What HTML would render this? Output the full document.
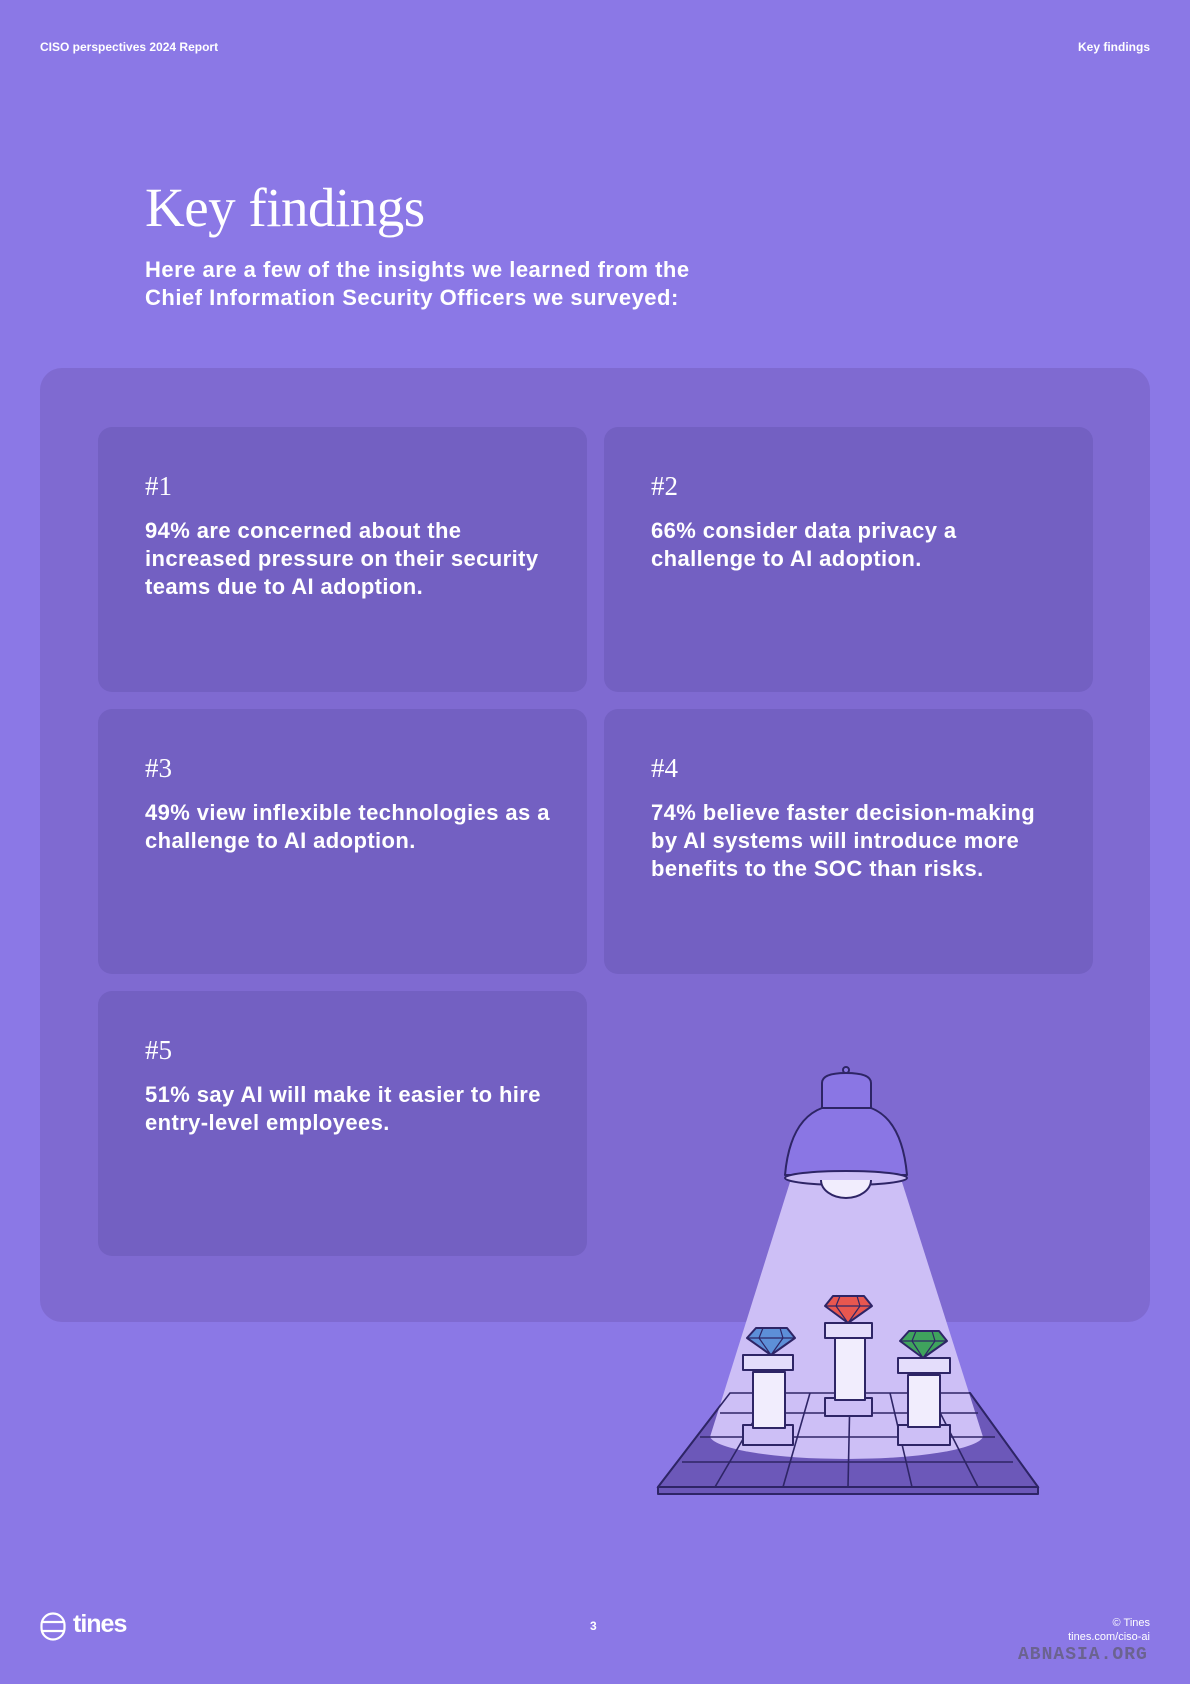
<!DOCTYPE html>
<html><head><meta charset="utf-8"><style>
*{margin:0;padding:0;box-sizing:border-box}
body{width:1190px;height:1684px;background:#8b78e6;position:relative;overflow:hidden;font-family:"Liberation Sans",sans-serif;color:#fff}
.hdr{position:absolute;top:40px;font-size:12px;font-weight:bold;letter-spacing:0}
h1{position:absolute;left:145px;top:176px;font-family:"Liberation Serif",serif;font-weight:normal;font-size:55px;letter-spacing:-0.5px}
.sub{position:absolute;left:145px;top:256px;font-size:22px;font-weight:bold;line-height:28px;letter-spacing:0.5px}
.panel{position:absolute;left:40px;top:368px;width:1110px;height:954px;background:#7f6ad1;border-radius:22px}
.card{position:absolute;width:489px;height:265px;background:#7360c2;border-radius:14px}
.num{position:absolute;left:47px;top:44px;font-family:"Liberation Serif",serif;font-size:27px}
.txt{position:absolute;left:47px;top:90px;font-size:22px;font-weight:bold;line-height:28px;letter-spacing:0.4px;white-space:nowrap}
.ft{position:absolute;font-size:12px;font-weight:bold}
</style></head><body>
<div class="hdr" style="left:40px">CISO perspectives 2024 Report</div>
<div class="hdr" style="right:40px">Key findings</div>
<h1>Key findings</h1>
<div class="sub">Here are a few of the insights we learned from the<br>Chief Information Security Officers we surveyed:</div>
<div class="panel"></div>
<div class="card" style="left:98px;top:427px"><div class="num">#1</div><div class="txt">94% are concerned about the<br>increased pressure on their security<br>teams due to AI adoption.</div></div>
<div class="card" style="left:604px;top:427px"><div class="num">#2</div><div class="txt">66% consider data privacy a<br>challenge to AI adoption.</div></div>
<div class="card" style="left:98px;top:709px"><div class="num">#3</div><div class="txt">49% view inflexible technologies as a<br>challenge to AI adoption.</div></div>
<div class="card" style="left:604px;top:709px"><div class="num">#4</div><div class="txt">74% believe faster decision-making<br>by AI systems will introduce more<br>benefits to the SOC than risks.</div></div>
<div class="card" style="left:98px;top:991px"><div class="num">#5</div><div class="txt">51% say AI will make it easier to hire<br>entry-level employees.</div></div>

<svg style="position:absolute;left:0;top:0" width="1190" height="1684" viewBox="0 0 1190 1684">
<g stroke="#2e2566" stroke-width="2" stroke-linejoin="round">
<polygon points="730,1393 970,1393 1038,1487 658,1487" fill="#6c58b9"/>
<polygon points="658,1487 1038,1487 1038,1494 658,1494" fill="#6c58b9"/>
</g>
<path d="M790,1182 L902,1182 L983,1437 A137,24 0 0 1 710,1437 Z" fill="#cdbff6"/>
<g stroke="#2e2566" stroke-width="1.6" fill="none">
<line x1="720" y1="1413" x2="978" y2="1413"/>
<line x1="700" y1="1437" x2="995" y2="1437"/>
<line x1="682" y1="1462" x2="1013" y2="1462"/>
<line x1="770" y1="1393" x2="715" y2="1487"/>
<line x1="810" y1="1393" x2="783" y2="1487"/>
<line x1="850" y1="1393" x2="848" y2="1487"/>
<line x1="890" y1="1393" x2="912" y2="1487"/>
<line x1="930" y1="1393" x2="978" y2="1487"/>
<polygon points="730,1393 970,1393 1038,1487 658,1487"/>
</g>
<g stroke="#2e2566" stroke-width="2" stroke-linejoin="round">
<path d="M822,1110 L822,1083 Q822,1073 846,1073 Q871,1073 871,1083 L871,1110 Z" fill="#8a76e4"/>
<circle cx="846" cy="1070" r="3" fill="#8a76e4"/>
<path d="M822,1108 Q790,1120 785,1175 L907,1175 Q902,1120 871,1108 Z" fill="#8a76e4"/>
<ellipse cx="846" cy="1178" rx="61" ry="7" fill="#cdbff6"/>
<path d="M821,1180 A25,18 0 0 0 871,1180" fill="#f1edfd"/>
<rect x="825" y="1398" width="47" height="18" fill="#cdbff6"/>
<rect x="835" y="1338" width="30" height="62" fill="#f1edfd"/>
<rect x="825" y="1323" width="47" height="15" fill="#e4ddfb"/>
<rect x="743" y="1425" width="50" height="20" fill="#cdbff6"/>
<rect x="753" y="1372" width="32" height="56" fill="#f1edfd"/>
<rect x="743" y="1355" width="50" height="15" fill="#e4ddfb"/>
<rect x="898" y="1425" width="52" height="20" fill="#cdbff6"/>
<rect x="908" y="1375" width="32" height="52" fill="#f1edfd"/>
<rect x="898" y="1358" width="52" height="15" fill="#e4ddfb"/>
<path d="M833,1296 L864,1296 L872,1306 L848,1323 L825,1306 Z" fill="#e8574f"/>
<path d="M825,1306 L872,1306 M840,1296 L836,1306 L848,1323 L860,1306 L857,1296" fill="none" stroke-width="1.2"/>
<path d="M756,1328 L787,1328 L795,1338 L771,1355 L747,1338 Z" fill="#5d8fd8"/>
<path d="M747,1338 L795,1338 M763,1328 L759,1338 L771,1355 L783,1338 L780,1328" fill="none" stroke-width="1.2"/>
<path d="M909,1331 L939,1331 L947,1341 L923,1358 L900,1341 Z" fill="#3fa35d"/>
<path d="M900,1341 L947,1341 M916,1331 L912,1341 L923,1358 L935,1341 L932,1331" fill="none" stroke-width="1.2"/>
</g>
</svg>

<svg style="position:absolute;left:40px;top:1612px" width="26" height="29" viewBox="0 0 26 29"><g fill="none" stroke="#fff" stroke-width="2.2"><rect x="1.5" y="1.5" width="23" height="26" rx="11.5"/><line x1="2" y1="10" x2="24" y2="10"/><line x1="1.5" y1="19" x2="24.5" y2="19"/></g></svg>
<div style="position:absolute;left:73px;top:1610px;font-size:25px;font-weight:bold;letter-spacing:-1px">tines</div>
<div class="ft" style="left:590px;top:1619px">3</div>
<div class="ft" style="right:40px;top:1617px;font-weight:normal;font-size:11px">© Tines</div>
<div class="ft" style="right:40px;top:1631px;font-weight:normal;font-size:11px">tines.com/ciso-ai</div>
<div style="position:absolute;left:1018px;top:1645px;font-size:18px;font-weight:bold;color:#6b6390;letter-spacing:1px;font-family:'Liberation Mono',monospace">ABNASIA.ORG</div>
</body></html>
